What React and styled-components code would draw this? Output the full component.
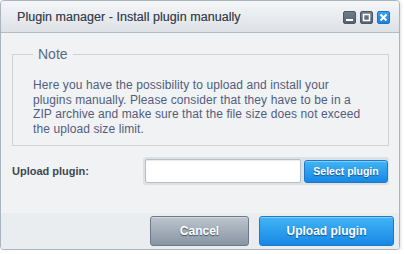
import React from 'react'
import styled, { createGlobalStyle } from 'styled-components'

const GlobalStyle = createGlobalStyle`
  * {
    box-sizing: border-box;
  }
  html, body {
    margin: 0;
    padding: 0;
    background: #ffffff;
  }
  body {
    font-family: "Liberation Sans", Arial, sans-serif;
  }
`

const Window = styled.div`
  width: 400px;
  height: 250px;
  display: flex;
  flex-direction: column;
  border: 1px solid #a9b4bf;
  border-radius: 4px;
  overflow: hidden;
  background: #f0f2f4;
  box-shadow: 1px 1px 3px rgba(0, 0, 0, 0.12);
`

const TitleBar = styled.div`
  height: 32px;
  flex: none;
  display: flex;
  align-items: center;
  justify-content: space-between;
  padding: 0 9px 0 16px;
  background: linear-gradient(#f4f6f8, #dde1e6);
  border-bottom: 1px solid #b2bcc6;
`

const Title = styled.span`
  font-size: 12.5px;
  color: #38424d;
  letter-spacing: 0.05px;
  text-shadow: 0 0 0.4px rgba(56, 66, 77, 0.6);
`

const Controls = styled.div`
  display: flex;
  gap: 4px;
  margin-top: 1px;
`

const ControlButton = styled.div`
  width: 13px;
  height: 13px;
  border-radius: 2px;
  display: flex;
  align-items: center;
  justify-content: center;
  background: ${p => (p.$close ? 'linear-gradient(#45a0ee, #1b80da)' : 'linear-gradient(#6e7c8b, #546272)')};
  border: 1px solid ${p => (p.$close ? '#1a74c6' : '#4b5866')};
`

const Body = styled.div`
  flex: 1;
  padding: 13px 10px 0 11px;
`

const Fieldset = styled.fieldset`
  margin: 0;
  width: 377px;
  border: 1px solid #ccd2d8;
  padding: 16px 24px 9px 20px;
`

const Legend = styled.legend`
  padding: 0 5px;
  font-size: 14px;
  line-height: 16px;
  color: #5b6a7f;
`

const Note = styled.p`
  margin: 0;
  font-size: 12px;
  line-height: 14.5px;
  letter-spacing: 0.1px;
  color: #525d7c;
`

const UploadRow = styled.div`
  display: flex;
  align-items: center;
  margin-top: 11px;
`

const Label = styled.label`
  width: 131px;
  font-size: 11px;
  font-weight: bold;
  color: #3e4751;
`

const FileBox = styled.div`
  display: flex;
  align-items: center;
  gap: 3px;
  padding: 2px 1px 2px 2px;
  width: 246px;
  border-radius: 3px;
  background: #dce1e6;
`

const FileInput = styled.input`
  width: 156px;
  height: 24px;
  margin: 0;
  border: 1px solid #b6bec7;
  border-radius: 2px;
  background: #ffffff;
  box-shadow: inset 0 1px 1px rgba(0, 0, 0, 0.08);
  outline: none;
`

const BlueButton = styled.button`
  font-family: "Liberation Sans", Arial, sans-serif;
  font-weight: bold;
  color: #ffffff;
  text-shadow: 0 1px 1px rgba(0, 40, 90, 0.6);
  border-radius: 3px;
  border: 1px solid #1c78cc;
  background: linear-gradient(#42b4f6, #1788e5);
  box-shadow: inset 0 1px 0 rgba(255, 255, 255, 0.35);
  padding: 0;
  cursor: pointer;
  width: ${p => p.$width}px;
  height: ${p => p.$height}px;
  font-size: ${p => p.$size}px;
`

const GrayButton = styled(BlueButton)`
  border-color: #6c7987;
  background: linear-gradient(#bcc5ce, #8895a3);
  text-shadow: 0 1px 1px rgba(30, 40, 50, 0.7);
`

const Footer = styled.div`
  height: 36px;
  flex: none;
  display: flex;
  justify-content: flex-end;
  align-items: flex-start;
  gap: 10px;
  padding: 3px 5px 0 0;
  background: #eaedf0;
`

const Minimize = () => (
  <svg width="9" height="9" viewBox="0 0 9 9">
    <rect x="1" y="6" width="7" height="2" fill="#fff" />
  </svg>
)

const Maximize = () => (
  <svg width="9" height="9" viewBox="0 0 9 9">
    <rect x="1.5" y="1.5" width="6" height="6" fill="none" stroke="#fff" strokeWidth="1.6" />
  </svg>
)

const Close = () => (
  <svg width="9" height="9" viewBox="0 0 9 9">
    <path d="M1.5 1.5 L7.5 7.5 M7.5 1.5 L1.5 7.5" stroke="#fff" strokeWidth="2" />
  </svg>
)

const App = () => (
  <>
    <GlobalStyle />
    <Window>
      <TitleBar>
        <Title>Plugin manager - Install plugin manually</Title>
        <Controls>
          <ControlButton><Minimize /></ControlButton>
          <ControlButton><Maximize /></ControlButton>
          <ControlButton $close><Close /></ControlButton>
        </Controls>
      </TitleBar>
      <Body>
        <Fieldset>
          <Legend>Note</Legend>
          <Note>
            Here you have the possibility to upload and install your plugins manually. Please
            consider that they have to be in a ZIP archive and make sure that the file size does
            not exceed the upload size limit.
          </Note>
        </Fieldset>
        <UploadRow>
          <Label>Upload plugin:</Label>
          <FileBox>
            <FileInput type="text" />
            <BlueButton $width={84} $height={23} $size={10.5}>Select plugin</BlueButton>
          </FileBox>
        </UploadRow>
      </Body>
      <Footer>
        <GrayButton $width={99} $height={30} $size={12}>Cancel</GrayButton>
        <BlueButton $width={135} $height={30} $size={12}>Upload plugin</BlueButton>
      </Footer>
    </Window>
  </>
)

export default App
